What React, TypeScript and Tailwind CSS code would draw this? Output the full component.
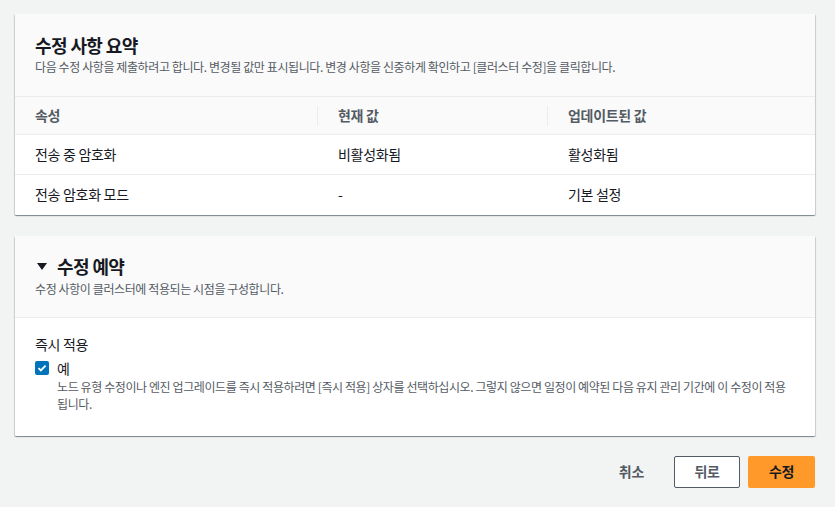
import React from 'react';

const rows = [
  { name: '전송 중 암호화', current: '비활성화됨', updated: '활성화됨' },
  { name: '전송 암호화 모드', current: '-', updated: '기본 설정' },
];

const cardShadow =
  'shadow-[0_1px_1px_0_rgba(0,28,36,0.3),1px_1px_1px_0_rgba(0,28,36,0.15),-1px_1px_1px_0_rgba(0,28,36,0.15)]';

const App: React.FC = () => {
  const [applyNow, setApplyNow] = React.useState(true);

  return (
    <div
      className="min-h-[507px] bg-[#f2f3f3] pl-[15px] pr-[20px] pt-[14px] text-[#16191f]"
      style={{ fontFamily: '"Noto Sans CJK KR", "Noto Sans", sans-serif' }}
    >
      {/* 수정 사항 요약 */}
      <div className={`bg-white rounded-[1px] overflow-hidden ${cardShadow}`}>
        <div className="bg-[#fafafa] px-5 pt-[20px] pb-[21px]">
          <h2 className="text-[18px] font-bold leading-[22px] tracking-[-0.6px]">수정 사항 요약</h2>
          <p className="mt-[3px] text-[12px] leading-[16px] tracking-[-0.4px] text-[#545b64]">
            다음 수정 사항을 제출하려고 합니다. 변경될 값만 표시됩니다. 변경 사항을 신중하게 확인하고 [클러스터 수정]을 클릭합니다.
          </p>
        </div>
        <table className="w-full border-collapse text-[14px] tracking-[-0.3px]">
          <thead>
            <tr className="bg-[#fafafa] border-t border-[#eaeded] border-b">
              <th className="w-[302px] h-[38px] pl-5 text-left font-bold text-[#545b64]">속성</th>
              <th className="w-[230px] h-[38px] text-left font-bold text-[#545b64]">
                <div className="flex items-center">
                  <span className="w-px h-[20px] bg-[#eaeded]" />
                  <span className="pl-5">현재 값</span>
                </div>
              </th>
              <th className="h-[38px] text-left font-bold text-[#545b64]">
                <div className="flex items-center">
                  <span className="w-px h-[20px] bg-[#eaeded]" />
                  <span className="pl-5">업데이트된 값</span>
                </div>
              </th>
            </tr>
          </thead>
          <tbody>
            {rows.map((r, i) => (
              <tr key={r.name} className={i > 0 ? 'border-t border-[#eaeded]' : ''}>
                <td className="h-[40px] pl-5">{r.name}</td>
                <td className="h-[40px] pl-[21px]">{r.current}</td>
                <td className="h-[40px] pl-[21px]">{r.updated}</td>
              </tr>
            ))}
          </tbody>
        </table>
      </div>

      {/* 수정 예약 */}
      <div className={`mt-[21px] bg-white rounded-[1px] overflow-hidden ${cardShadow}`}>
        <div className="bg-[#fafafa] px-5 pt-[19px] pb-[20px] border-b border-[#eaeded]">
          <div className="flex items-center gap-[9px]">
            <svg width="12" height="12" viewBox="0 0 12 12" className="ml-px">
              <path d="M1 3h10L6 10z" fill="#16191f" />
            </svg>
            <h2 className="text-[18px] font-bold leading-[22px] tracking-[-0.6px]">수정 예약</h2>
          </div>
          <p className="mt-[4px] text-[12px] leading-[16px] tracking-[-0.4px] text-[#545b64]">
            수정 사항이 클러스터에 적용되는 시점을 구성합니다.
          </p>
        </div>
        <div className="px-5 pt-[15px] pb-[24px]">
          <div className="text-[14px] leading-[22px] tracking-[-0.3px]">즉시 적용</div>
          <div className="mt-[3px] flex gap-2">
            <button
              type="button"
              onClick={() => setApplyNow(!applyNow)}
              className={`mt-[3px] w-[14px] h-[14px] shrink-0 rounded-[2px] flex items-center justify-center ${
                applyNow ? 'bg-[#0073bb]' : 'bg-white border border-[#aab7b8]'
              }`}
              aria-label="예"
            >
              {applyNow && (
                <svg width="10" height="10" viewBox="0 0 10 10">
                  <path d="M1.5 5.2l2.3 2.3L8.6 2.6" stroke="white" strokeWidth="1.8" fill="none" />
                </svg>
              )}
            </button>
            <div>
              <div className="text-[14px] leading-[20px]">예</div>
              <p className="text-[12px] leading-[17px] tracking-[-0.4px] text-[#545b64]">
                노드 유형 수정이나 엔진 업그레이드를 즉시 적용하려면 [즉시 적용] 상자를 선택하십시오. 그렇지 않으면 일정이 예약된 다음 유지 관리 기간에 이 수정이 적용 됩니다.
              </p>
            </div>
          </div>
        </div>
      </div>

      {/* 버튼 */}
      <div className="mt-[20px] flex items-center justify-end text-[14px] font-bold tracking-[-0.3px]">
        <button className="h-[32px] px-5 text-[#545b64] mr-[10px]">취소</button>
        <button className="h-[32px] w-[66px] border border-[#545b64] rounded-[2px] bg-white text-[#545b64] whitespace-nowrap">
          뒤로
        </button>
        <button className="ml-2 h-[32px] w-[67px] rounded-[2px] bg-[#ff9a2a] text-[#16191f] whitespace-nowrap">
          수정
        </button>
      </div>
    </div>
  );
};

export default App;
